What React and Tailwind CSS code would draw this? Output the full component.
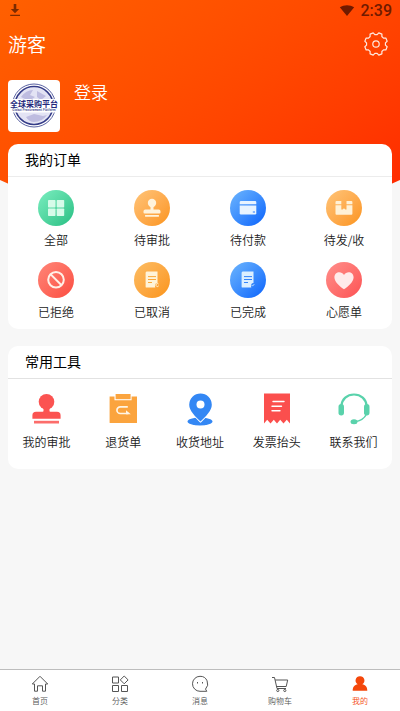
const orders = [
  { label: '全部', icon: AllIcon, bg: 'from-[#79eec0] to-[#1fbf83]' },
  { label: '待审批', icon: ApproveIcon, bg: 'from-[#ffc477] to-[#fb9410]' },
  { label: '待付款', icon: CardIcon, bg: 'from-[#6db5fd] to-[#0561fb]' },
  { label: '待发/收', icon: BoxIcon, bg: 'from-[#ffc477] to-[#fb9410]' },
  { label: '已拒绝', icon: BanIcon, bg: 'from-[#ff8578] to-[#fb4b40]' },
  { label: '已取消', icon: CancelledIcon, bg: 'from-[#fcbd62] to-[#fb9410]' },
  { label: '已完成', icon: DoneIcon, bg: 'from-[#6db5fd] to-[#0561fb]' },
  { label: '心愿单', icon: HeartIcon, bg: 'from-[#ff8e8b] to-[#fc5053]' },
]

const tools = [
  { label: '我的审批', icon: StampIcon },
  { label: '退货单', icon: ReturnIcon },
  { label: '收货地址', icon: PinIcon },
  { label: '发票抬头', icon: InvoiceIcon },
  { label: '联系我们', icon: HeadsetIcon },
]

const tabs = [
  { label: '首页', icon: HomeIcon },
  { label: '分类', icon: CategoryIcon },
  { label: '消息', icon: MessageIcon },
  { label: '购物车', icon: CartIcon },
  { label: '我的', icon: UserIcon, active: true },
]

/* Order icons, drawn inside the 36px circles */
function OrderSvg({ children }) {
  return <svg viewBox="0 0 36 36" className="size-9" aria-hidden="true">{children}</svg>
}

function AllIcon() {
  return (
    <OrderSvg>
      <g fill="#d6fbe9">
        <rect x="10" y="10" width="7.5" height="7.5" rx=".7" />
        <rect x="18.7" y="10" width="7.5" height="7.5" rx=".7" />
        <rect x="10" y="18.5" width="7.5" height="7.5" rx=".7" />
        <rect x="18.7" y="18.5" width="7.5" height="7.5" rx=".7" />
      </g>
    </OrderSvg>
  )
}

function ApproveIcon() {
  return (
    <OrderSvg>
      <g fill="#fff3dc">
        <circle cx="18" cy="13" r="4.2" />
        <path d="M16.5 16h3v3.500h5.200a1.800 1.800 0 0 1 1.800 1.800v1.200a1 1 0 0 1-1 1h-15a1 1 0 0 1-1-1v-1.200a1.800 1.800 0 0 1 1.800-1.800h5.200z" />
        <rect x="11" y="25" width="14" height="1.7" rx=".4" />
      </g>
    </OrderSvg>
  )
}

function CardIcon() {
  return (
    <OrderSvg>
      <path d="M11 11h14a1.3 1.3 0 0 1 1.3 1.3v2H9.7v-2A1.3 1.3 0 0 1 11 11z" fill="#e8f4ff" />
      <path d="M9.7 15.6h16.6v7.6a1.3 1.3 0 0 1-1.3 1.3H11a1.3 1.3 0 0 1-1.3-1.3z" fill="#e8f4ff" />
      <path d="M22.8 22h2.2" stroke="#287bfc" strokeWidth="1" />
    </OrderSvg>
  )
}

function BoxIcon() {
  return (
    <OrderSvg>
      <g fill="#fff1d6">
        <path d="M10.500 11h4.800v3.200H9.500V12a1 1 0 0 1 1-1z" />
        <path d="M20.500 11h4.900a1 1 0 0 1 1 1v2.200h-5.900z" />
        <path d="M9.500 15.200h5.800v4.300h1.300l1.400-1.200 1.400 1.200h1.100v-4.300h5.900v8.500a1 1 0 0 1-1 1H10.500a1 1 0 0 1-1-1z" />
      </g>
    </OrderSvg>
  )
}

function BanIcon() {
  return (
    <OrderSvg>
      <circle cx="18" cy="17.7" r="7.8" fill="none" stroke="#fff0e7" strokeWidth="2" />
      <path d="M12.7 12.4 23.3 23" stroke="#fff0e7" strokeWidth="2" />
    </OrderSvg>
  )
}

function CancelledIcon() {
  return (
    <OrderSvg>
      <path d="M12.500 9.600h11v11.500c-2 0-3.200 1.500-2.200 4.500h-8.800a.9.900 0 0 1-.9-.9V10.500z" fill="#fff3d9" />
      <path d="M14 14.600h8M14 17.500h8M14 20.500h4" stroke="#fba83a" strokeWidth="1" />
      <path d="M24.500 22a1.500 1.500 0 1 0 .2 1.800" fill="none" stroke="#fff3d9" strokeWidth="1" />
    </OrderSvg>
  )
}

function DoneIcon() {
  return (
    <OrderSvg>
      <path d="M12.500 9.600h11v11.500c-2 0-3.200 1.500-2.200 4.500h-8.800a.9.900 0 0 1-.9-.9V10.500z" fill="#dcefff" />
      <path d="M14 14.600h8M14 17.500h8M14 20.500h4" stroke="#3484fa" strokeWidth="1" />
      <path d="m21.500 22.800 1 1.300 1.800-2" fill="none" stroke="#b9dcff" strokeWidth="1" />
    </OrderSvg>
  )
}

function HeartIcon() {
  return (
    <OrderSvg>
      <path d="M18 27.200C14 24.400 8.400 20.200 8.400 15.200c0-5.600 7-6.800 9.600-2.300 2.600-4.500 9.600-3.300 9.600 2.300 0 5-5.600 9.200-9.600 12z" fill="#ffeaea" />
    </OrderSvg>
  )
}

/* Tool icons */
function ToolSvg({ children }) {
  return <svg viewBox="0 0 36 36" className="size-9" aria-hidden="true">{children}</svg>
}

function StampIcon() {
  return (
    <ToolSvg>
      <g fill="#fb5351">
        <circle cx="18.500" cy="9.800" r="7.800" />
        <path d="M15.500 15h6v4q0 .8.800.8h6.700a3.600 3.600 0 0 1 3.600 3.600v3.400H4.400v-3.400A3.600 3.600 0 0 1 8 19.800h6.700q.8 0 .8-.8z" />
        <path d="M6 28.800h25v2.700H6z" opacity=".85" />
      </g>
    </ToolSvg>
  )
}

function ReturnIcon() {
  return (
    <ToolSvg>
      <path d="M4.600 4.500h4.900v3.700h17.100V4.500h5.400v26q0 .5-.5.500H5.100q-.5 0-.5-.500z" fill="#fba43e" />
      <path d="M10.600 2h15v5.200h-15z" fill="#fba43e" />
      <path d="M22.800 14.800h-7.500a3.300 3.300 0 0 0 0 6.700h8" fill="none" stroke="#fff5e5" strokeWidth="1.700" />
      <path d="M21 18.300 25.800 22.300H21z" fill="#fff5e5" />
    </ToolSvg>
  )
}

function PinIcon() {
  return (
    <ToolSvg>
      <ellipse cx="18" cy="29.500" rx="12.500" ry="4" fill="#3387f4" />
      <path d="M18.500 29.500C13 24.500 7.200 18.500 7.200 12.800a11.300 11.300 0 0 1 22.600 0c0 5.700-5.800 11.700-11.300 16.700z" fill="#3387f4" stroke="#fff" strokeWidth="2" paintOrder="stroke" />
      <circle cx="18.500" cy="12.500" r="4" fill="#fff" />
    </ToolSvg>
  )
}

function InvoiceIcon() {
  return (
    <ToolSvg>
      <path d="M5 1.500h26v30l-3.200-3.700-3.300 3.700-3.300-3.700-3.200 3.700-3.200-3.700-3.300 3.700-3.300-3.700L5 31.500z" fill="#fb4f4d" />
      <path d="M14 9.500h11M13 14.300h9.500M13 18.800h8" stroke="#fff" strokeWidth="1.400" strokeLinecap="round" />
    </ToolSvg>
  )
}

function HeadsetIcon() {
  return (
    <ToolSvg>
      <path d="M5.300 14C6 7 11 2.500 18 2.500S30 7 30.700 14" fill="none" stroke="#59d2ab" strokeWidth="2.200" />
      <path d="M30.500 22c-2 4.500-6 7-12 7.700" fill="none" stroke="#59d2ab" strokeWidth="1.500" />
      <rect x="2.500" y="12" width="5.500" height="11.500" rx="2.700" fill="#59d2ab" />
      <rect x="28" y="12" width="5.500" height="11.500" rx="2.700" fill="#59d2ab" />
      <ellipse cx="18" cy="29.800" rx="3.500" ry="2.500" fill="#59d2ab" />
    </ToolSvg>
  )
}

/* Tab bar icons */
function TabSvg({ children }) {
  return (
    <svg viewBox="0 0 18 18" className="size-[18px]" fill="none" stroke="currentColor" strokeWidth="1" strokeLinejoin="round" aria-hidden="true">
      {children}
    </svg>
  )
}

function HomeIcon() {
  return (
    <TabSvg>
      <path d="M1.300 9 9 1.300 16.700 9h-2.200v7.200h-3v-5.400h-5v5.400h-3V9z" />
    </TabSvg>
  )
}

function CategoryIcon() {
  return (
    <TabSvg>
      <path d="M1.500 2h6v6h-6zM1.500 10.500h6v6h-6zM10.500 10.500h6v6h-6zM13.200 1l3.900 3.900-3.900 3.900-3.900-3.900z" />
    </TabSvg>
  )
}

function MessageIcon() {
  return (
    <TabSvg>
      <path d="M9 1.300a7.500 7.500 0 1 0 0 15h6.800l-1.300-2.200A7.500 7.500 0 0 0 9 1.300z" />
      <path d="M6.500 7v1.500M11.500 7v1.500" />
    </TabSvg>
  )
}

function CartIcon() {
  return (
    <TabSvg>
      <path d="M1 2.500h2.500L6 13.500h9M4.200 5h12.500l-1.500 6.500H5.600" />
      <circle cx="6.800" cy="15.500" r="1.100" />
      <circle cx="13.800" cy="15.500" r="1.100" />
    </TabSvg>
  )
}

function UserIcon() {
  return (
    <TabSvg>
      <path d="M9 1.200a4.300 4.300 0 0 1 2.300 8c3 .7 5 2.300 5 6.500H1.700c0-4.200 2-5.800 5-6.500a4.300 4.300 0 0 1 2.300-8z" fill="currentColor" stroke="none" />
    </TabSvg>
  )
}

function StatusBar() {
  return (
    <div className="flex h-[22px] items-center justify-between px-2">
      <svg viewBox="0 0 14 14" className="size-[14px] text-[#7c2b00]" fill="currentColor" aria-hidden="true">
        <path d="M5.700 0h2.600v5h2.900L7 9.300 2.800 5h2.900zM2.200 10.800h9.800v1.200H2.200z" />
      </svg>
      <div className="flex items-center gap-1.5 text-[#701a00]">
        <svg viewBox="0 0 16 12" className="h-3 w-4" fill="currentColor" aria-hidden="true">
          <path d="M8 11 .8 2.300C5-.4 11-.4 15.200 2.300z" />
        </svg>
        <span className="font-[Roboto] text-base font-medium">2:39</span>
      </div>
    </div>
  )
}

function Avatar() {
  return (
    <div className="flex size-[52px] items-center justify-center rounded bg-white">
      <svg viewBox="0 0 52 52" className="size-[52px]" role="img" aria-label="全球采购平台">
        <circle cx="26" cy="25.500" r="18" fill="#e3e3f4" />
        <path d="M13 17q5-7 12-7l-3 5 5 2-6 4zM29 11l9 5-5 4-4-3zM18 37l8-3 9 2 4-1q-5 7-13 7-5 0-8-5z" fill="#bebce0" />
        <circle cx="26" cy="25.500" r="21.500" fill="none" stroke="#5961a2" strokeWidth="1" />
        <circle cx="26" cy="25.500" r="19" fill="none" stroke="#343b88" strokeWidth="1.600" />
        <path d="M0 19h52v13.500H0z" fill="#fff" />
        <text x="26" y="26.500" textAnchor="middle" fontSize="8" fontWeight="700" fill="#23277b">全球采购平台</text>
        <text x="26" y="30.500" textAnchor="middle" fontSize="3" fontWeight="700" fill="#4b4f92">Global Procurement Platform</text>
      </svg>
    </div>
  )
}

/* Eight teeth, with a notch facing straight up */
const gearPath = Array.from({ length: 8 }, (_, i) => {
  const at = (deg, r) => {
    const a = ((i * 45 + deg - 90) * Math.PI) / 180
    return `${(12 + r * Math.cos(a)).toFixed(2)} ${(12 + r * Math.sin(a)).toFixed(2)}`
  }
  return `${i ? 'L' : 'M'}${at(-7, 9.5)}L${at(7, 9.5)}L${at(14, 11.5)}L${at(31, 11.5)}`
}).join('') + 'z'

function GearIcon() {
  return (
    <svg viewBox="0 0 24 24" className="size-6" fill="none" stroke="#ffe9df" strokeWidth="1.200" strokeLinejoin="round" aria-hidden="true">
      <path d={gearPath} />
      <circle cx="12" cy="12" r="3.200" />
    </svg>
  )
}

export default function App() {
  return (
    <div className="flex min-h-screen flex-col bg-[#f7f7f7] font-['Noto_Sans_CJK_SC',sans-serif] font-[350] text-[#222]">
      <div className="relative isolate flex-1 px-2">
        {/* Header background with pointed bottom edge */}
        <div className="absolute inset-x-0 top-0 -z-10 h-[270px] bg-linear-to-br from-[#ff6000] to-[#ff2b00] to-85% [clip-path:polygon(0_0,100%_0,100%_180px,50%_100%,0_180px)]" />

        <header className="-mx-2">
          <StatusBar />
          <div className="flex h-11 items-center justify-between pr-3 pl-2 text-white">
            <h1 className="text-[19px]">游客</h1>
            <button type="button" aria-label="设置"><GearIcon /></button>
          </div>
        </header>

        <div className="mt-3.5 flex items-start gap-3.5 pb-3">
          <Avatar />
          <a href="#login" className="text-[17px] leading-6 text-white">登录</a>
        </div>

        {/* Orders */}
        <section className="rounded-[10px] bg-white">
          <h2 className="h-[33px] border-b border-[#ececec] pl-[17px] text-sm leading-[31px] font-normal text-black">我的订单</h2>
          <div className="grid grid-cols-4 gap-y-[13px] pt-[13px] pb-2">
            {orders.map(({ label, icon: Icon, bg }) => (
              <a key={label} href="#orders" className="flex flex-col items-center gap-[5px]">
                <span className={`rounded-full bg-linear-to-br ${bg}`}><Icon /></span>
                <span className="text-xs leading-[18px]">{label}</span>
              </a>
            ))}
          </div>
        </section>

        {/* Tools */}
        <section className="mt-[17px] rounded-[10px] bg-white">
          <h2 className="h-[33px] border-b border-[#e2e2e2] pl-[17px] text-sm leading-[31px] font-normal text-black">常用工具</h2>
          <div className="grid grid-cols-5 pt-[13px] pb-[18px]">
            {tools.map(({ label, icon: Icon }) => (
              <a key={label} href="#tools" className="flex flex-col items-center gap-[5px]">
                <Icon />
                <span className="text-xs leading-[18px]">{label}</span>
              </a>
            ))}
          </div>
        </section>
      </div>

      <nav className="grid h-[42px] grid-cols-5 border-t border-[#bdbdbd] bg-white">
        {tabs.map(({ label, icon: Icon, active }) => (
          <a
            key={label}
            href="#tab"
            aria-current={active ? 'page' : undefined}
            className={`flex flex-col items-center gap-[2px] pt-[5px] ${active ? 'text-[#f4470b]' : 'text-[#555]'}`}
          >
            <Icon />
            <span className="text-[8px] leading-3">{label}</span>
          </a>
        ))}
      </nav>
    </div>
  )
}
